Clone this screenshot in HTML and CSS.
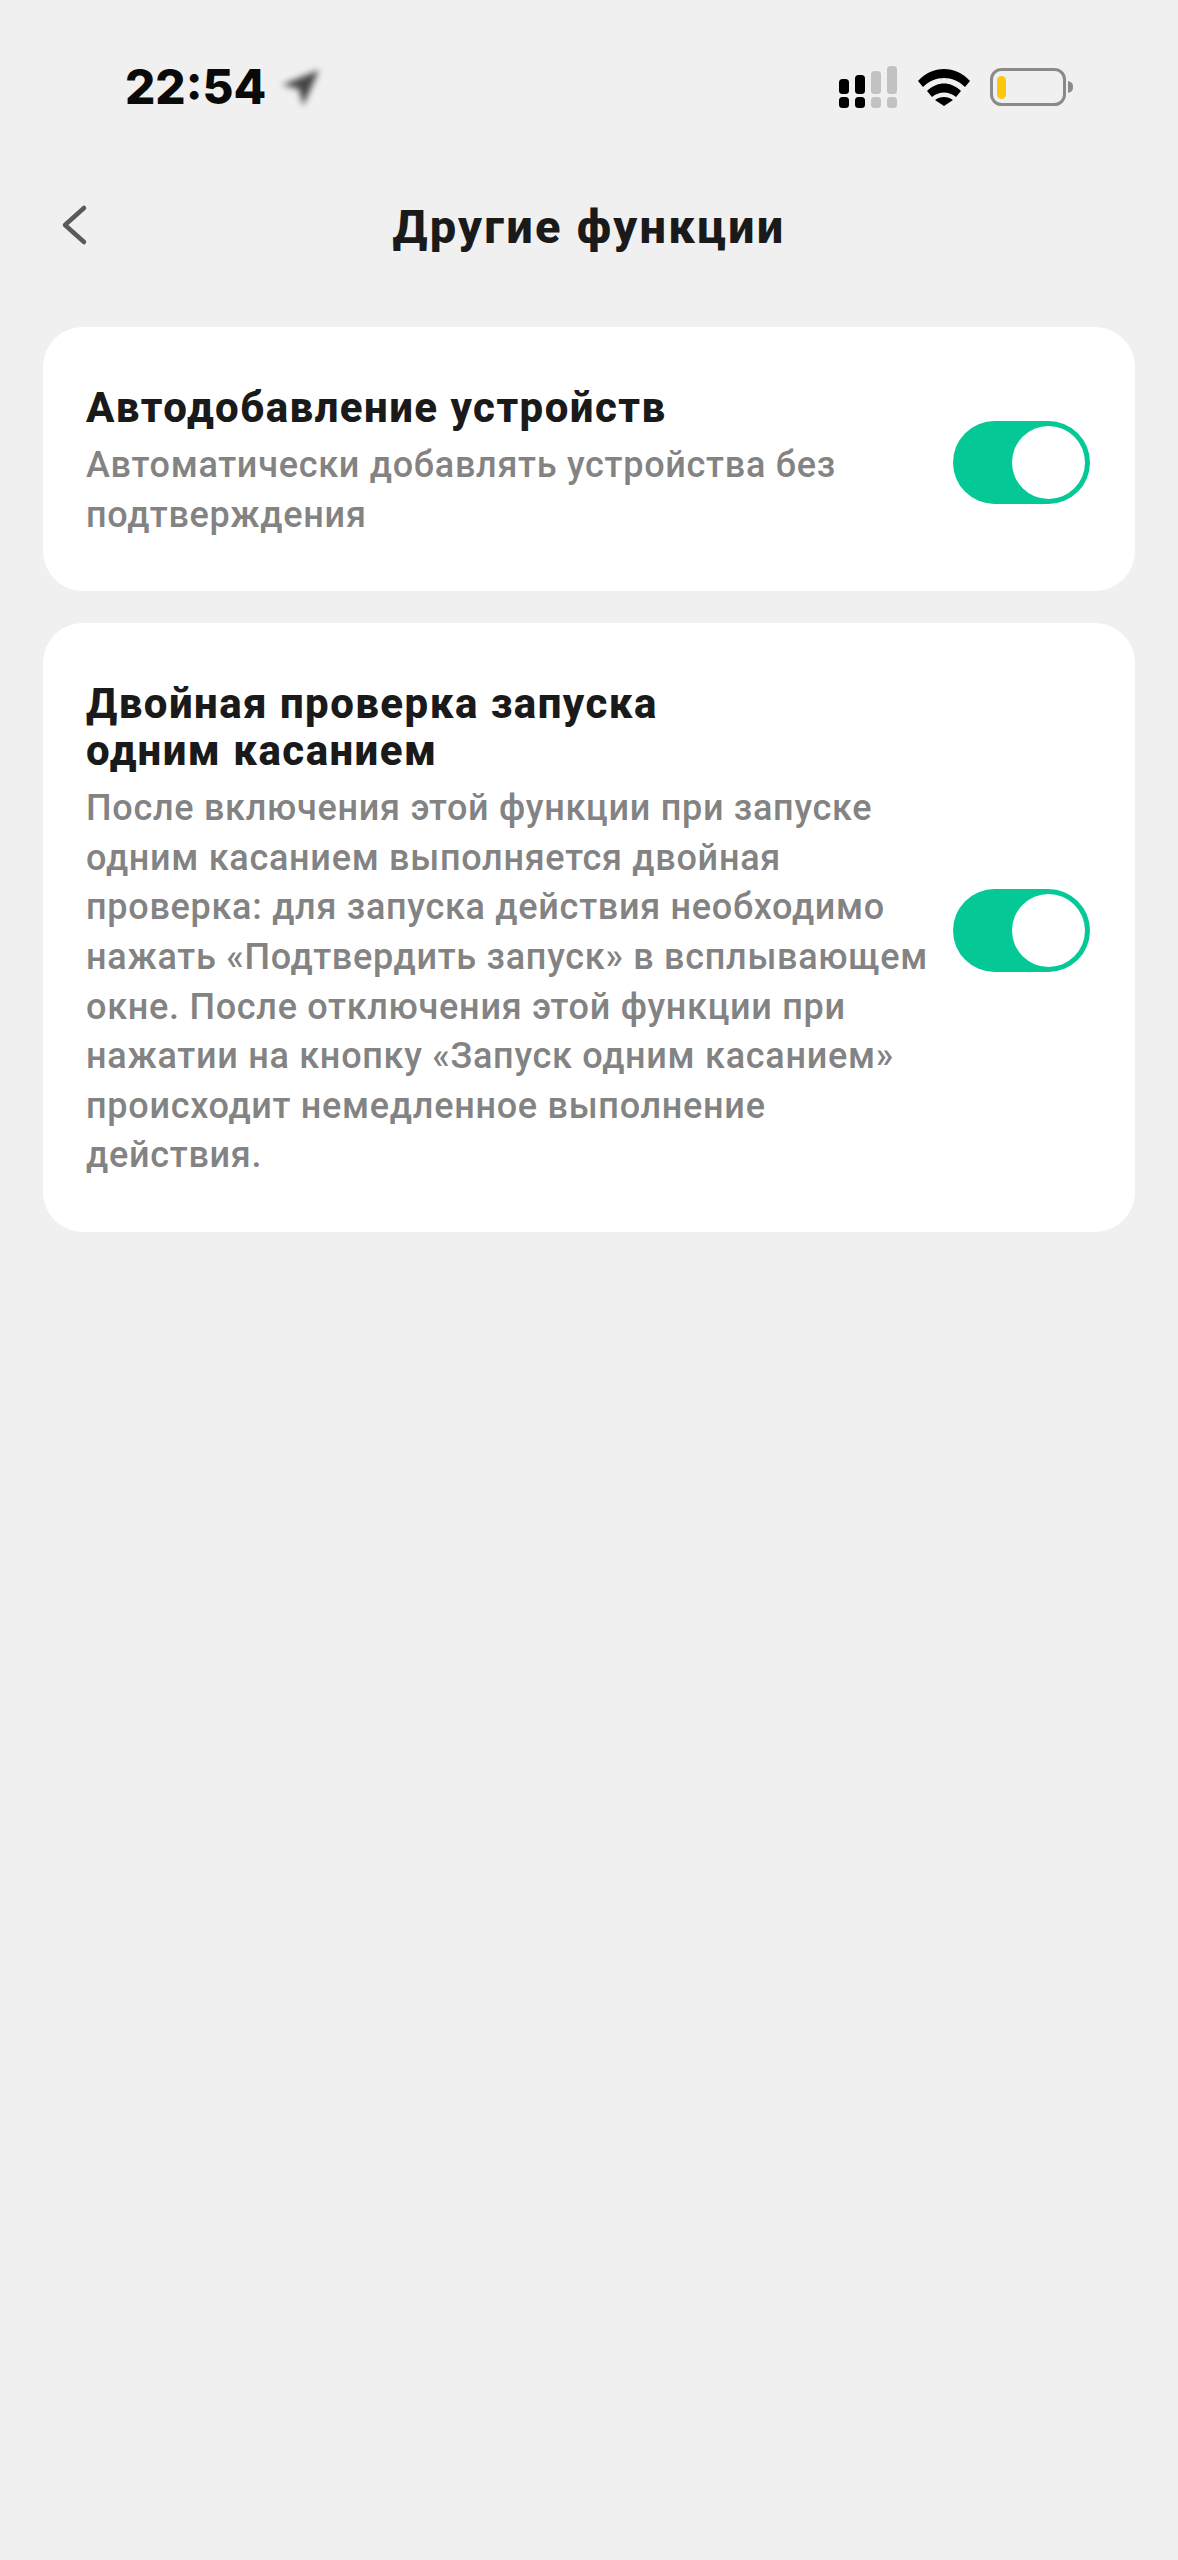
FILE: index.html
```html
<!DOCTYPE html>
<html lang="ru">
<head>
<meta charset="utf-8">
<title>Другие функции</title>
<link rel="stylesheet" href="styles.css">
</head>
<body>
<div class="screen">
  <header class="status">
    <div class="status-left">
      <span class="time">22:54</span>
      <svg class="loc" width="44" height="44" viewBox="0 0 44 44"><path d="M41 5 4 20l17 4 4 17z" fill="#444"/></svg>
    </div>
    <div class="status-right">
      <svg class="signal" width="62" height="42" viewBox="0 0 62 42">
        <g fill="#000"><rect x="3" y="13" width="10" height="15" rx="3.5"/><rect x="19" y="9" width="10" height="19" rx="3.5"/><rect x="3" y="31" width="10" height="11" rx="3.5"/><rect x="19" y="31" width="10" height="11" rx="3.5"/></g>
        <g fill="#c2c2c2"><rect x="35" y="5" width="10" height="23" rx="3.5"/><rect x="51" y="0" width="10" height="28" rx="3.5"/><rect x="35" y="31" width="10" height="11" rx="3.5"/><rect x="51" y="31" width="10" height="11" rx="3.5"/></g>
      </svg>
      <svg class="wifi" width="52" height="38" viewBox="0 0 52 38">
        <path d="M0 13C14-3 38-3 52 13l-5 6C35 7 17 7 5 19z M9 23c10-10 24-10 34 0l-5 6c-7-6-17-6-24 0z M17 32c5-4 13-4 18 0l-9 6z" fill="#000"/>
      </svg>
      <svg class="battery" width="84" height="38" viewBox="0 0 84 38">
        <rect x="1.5" y="1.5" width="73" height="35" rx="10" fill="none" stroke="#8a8a8a" stroke-width="3"/>
        <rect x="7" y="8" width="9" height="23" rx="4.5" fill="#fdc70c"/>
        <path d="M78 13c4 1 5 3 5 6s-1 5-5 6z" fill="#8a8a8a"/>
      </svg>
    </div>
  </header>
  <nav class="nav">
    <svg class="back" width="28" height="42" viewBox="0 0 28 42"><path d="M24 4 5 21l19 17" fill="none" stroke="#5a5a5a" stroke-width="4.5" stroke-linecap="round" stroke-linejoin="round"/></svg>
    <h1 class="nav-title">Другие функции</h1>
  </nav>
  <main class="list">
    <section class="card">
      <div class="card-text">
        <h2 class="card-title">Автодобавление устройств</h2>
        <p class="card-desc">Автоматически добавлять устройства без подтверждения</p>
      </div>
      <div class="toggle"><span class="knob"></span></div>
    </section>
    <section class="card">
      <div class="card-text">
        <h2 class="card-title">Двойная проверка запуска<br>одним касанием</h2>
        <p class="card-desc">После включения этой функции при запуске одним касанием выполняется двойная проверка: для запуска действия необходимо нажать «Подтвердить запуск» в всплывающем окне. После отключения этой функции при нажатии на кнопку «Запуск одним касанием» происходит немедленное выполнение действия.</p>
      </div>
      <div class="toggle"><span class="knob"></span></div>
    </section>
  </main>
</div>
</body>
</html>
```
FILE: styles.css
```css
* { box-sizing: border-box; }
html, body { margin: 0; padding: 0; }
body { background: #f0f0f0; font-family: Roboto, "Noto Sans", sans-serif; }
.screen { width: 1178px; height: 2560px; display: flex; flex-direction: column; }
.status { height: 172px; padding: 62px 104px 0 125px; display: flex; justify-content: space-between; align-items: flex-start; }
.status-left { display: flex; align-items: center; gap: 12px; }
.time { font-family: Inter, sans-serif; font-size: 47.6px; font-weight: 800; color: #0a0a0a; line-height: 50px; }
.loc { filter: blur(3px); }
.status-right { display: flex; align-items: center; gap: 20px; padding-top: 4px; }
.nav { height: 108px; position: relative; display: flex; align-items: center; justify-content: center; }
.back { position: absolute; left: 60px; top: 32px; }
.nav-title { margin: 0; font-size: 47px; font-weight: 800; letter-spacing: 2.25px; color: #1a1a1a; }
.list { margin-top: 47px; padding: 0 43px 0 43px; display: flex; flex-direction: column; gap: 32px; }
.card { background: #fff; border-radius: 40px; padding: 57px 45px 51px 43px; display: flex; align-items: center; justify-content: space-between; gap: 24px; }
.card-text { width: 846px; }
.card-title { margin: 0; font-size: 42px; line-height: 47px; font-weight: 800; letter-spacing: 1.45px; color: #1a1a1a; }
.card-desc { margin: 10px 0 0; font-size: 36px; line-height: 49.6px; font-weight: 500; letter-spacing: 0.72px; color: #838383; }
.toggle { flex: none; width: 137px; height: 83px; border-radius: 42px; background: #04c997; position: relative; }
.knob { position: absolute; top: 5px; right: 5px; width: 73px; height: 73px; border-radius: 50%; background: #fff; }
```
